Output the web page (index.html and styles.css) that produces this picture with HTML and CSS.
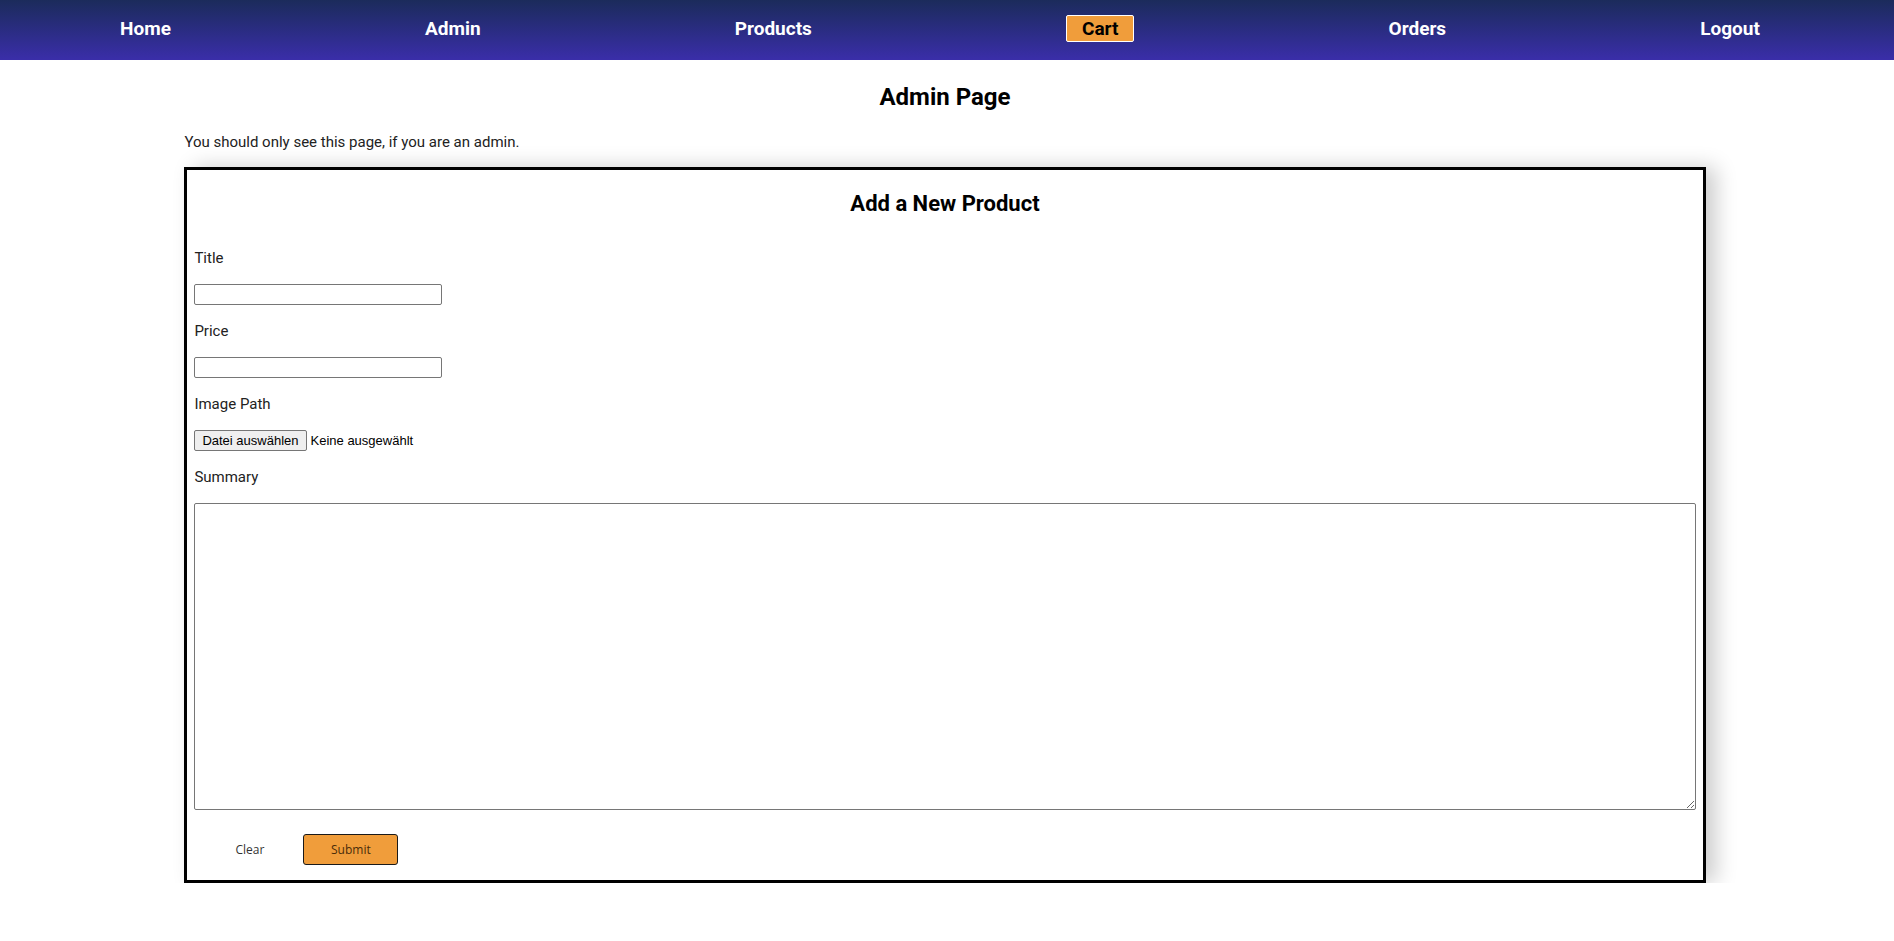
FILE: index.html
```html
<!DOCTYPE html>
<html lang="en">
<head>
<meta charset="utf-8">
<title>Admin Page</title>
<link rel="stylesheet" href="styles.css">
</head>
<body>
<nav class="nav">
  <a href="#" class="nav-link">Home</a>
  <a href="#" class="nav-link">Admin</a>
  <a href="#" class="nav-link">Products</a>
  <a href="#" class="nav-link nav-link-active">Cart</a>
  <a href="#" class="nav-link">Orders</a>
  <a href="#" class="nav-link">Logout</a>
</nav>
<main class="main">
  <h2 class="page-title">Admin Page</h2>
  <p class="intro">You should only see this page, if you are an admin.</p>
  <form class="card">
    <h3 class="card-title">Add a New Product</h3>
    <label class="field-label" for="title">Title</label>
    <input class="text-input" id="title" type="text">
    <label class="field-label" for="price">Price</label>
    <input class="text-input" id="price" type="text">
    <label class="field-label">Image Path</label>
    <div class="file-row">
      <span class="file-btn">Datei auswählen</span>
      <span class="file-name">Keine ausgewählt</span>
    </div>
    <label class="field-label" for="summary">Summary</label>
    <textarea class="summary" id="summary"></textarea>
    <div class="actions">
      <button type="button" class="btn-clear">Clear</button>
      <button type="button" class="btn-submit">Submit</button>
    </div>
  </form>
</main>
</body>
</html>
```

FILE: styles.css
```css
body {
  margin: 0;
  font-family: Roboto, "Liberation Sans", sans-serif;
  color: #222;
  background: #fff;
  overflow-x: hidden;
}

.nav {
  height: 60px;
  box-sizing: border-box;
  margin-left: -7px;
  padding: 0 7px 4px 0;
  display: flex;
  justify-content: space-around;
  align-items: center;
  background: linear-gradient(#1b2b5b, #3a2ea9);
}

.nav-link {
  color: #fff;
  font-weight: 700;
  font-size: 19px;
  line-height: 23px;
  text-decoration: none;
}

.nav-link-active {
  background: #f09d3b;
  color: #000;
  border: 1px solid #fff;
  border-radius: 2px;
  padding: 1px 15px;
}

.main {
  width: calc(80% + 6px);
  margin-left: calc(10% - 5px);
  margin-right: auto;
}

.page-title {
  font-size: 24px;
  line-height: 30px;
  font-weight: 700;
  text-align: center;
  margin: 22px 0 20px;
  color: #000;
}

.intro {
  font-size: 15px;
  line-height: 20px;
  margin: 0 0 15px;
}

.card {
  border: 3px solid #000;
  box-shadow: 10px 0 20px rgba(0, 0, 0, 0.2);
  padding: 0 7px 15px;
  display: flex;
  flex-direction: column;
  gap: 16px;
}

.card-title {
  font-size: 22px;
  line-height: 28px;
  font-weight: 700;
  text-align: center;
  margin: 20px 0 14px;
  color: #000;
}

.field-label {
  font-size: 15px;
  line-height: 20px;
}

.text-input {
  align-self: flex-start;
  box-sizing: border-box;
  width: 248px;
  height: 21px;
  border: 1px solid #767676;
  border-radius: 2px;
  padding: 1px 2px;
  margin: 0;
}

.file-row {
  display: flex;
  align-items: center;
  gap: 4px;
  font-family: "Liberation Sans", Arial, sans-serif;
  font-size: 13px;
  height: 21px;
}

.file-btn {
  display: inline-flex;
  align-items: center;
  height: 21px;
  box-sizing: border-box;
  padding: 0 7px;
  background: #efefef;
  border: 1px solid #767676;
  border-radius: 2px;
  color: #000;
}

.file-name {
  color: #000;
}

.summary {
  box-sizing: border-box;
  width: 100%;
  height: 307px;
  border: 1px solid #767676;
  border-radius: 2px;
  margin: 0;
}

.actions {
  display: flex;
  gap: 6px;
  margin-top: 8px;
  padding-left: 8px;
}

.btn-clear,
.btn-submit {
  width: 95px;
  height: 31px;
  font-family: "Open Sans", sans-serif;
  font-size: 12px;
  cursor: pointer;
}

.btn-clear {
  background: none;
  border: none;
  color: #333;
}

.btn-submit {
  background: #f09d3b;
  border: 1px solid #1a1a1a;
  border-radius: 3px;
  color: #4a2c0a;
}
```
